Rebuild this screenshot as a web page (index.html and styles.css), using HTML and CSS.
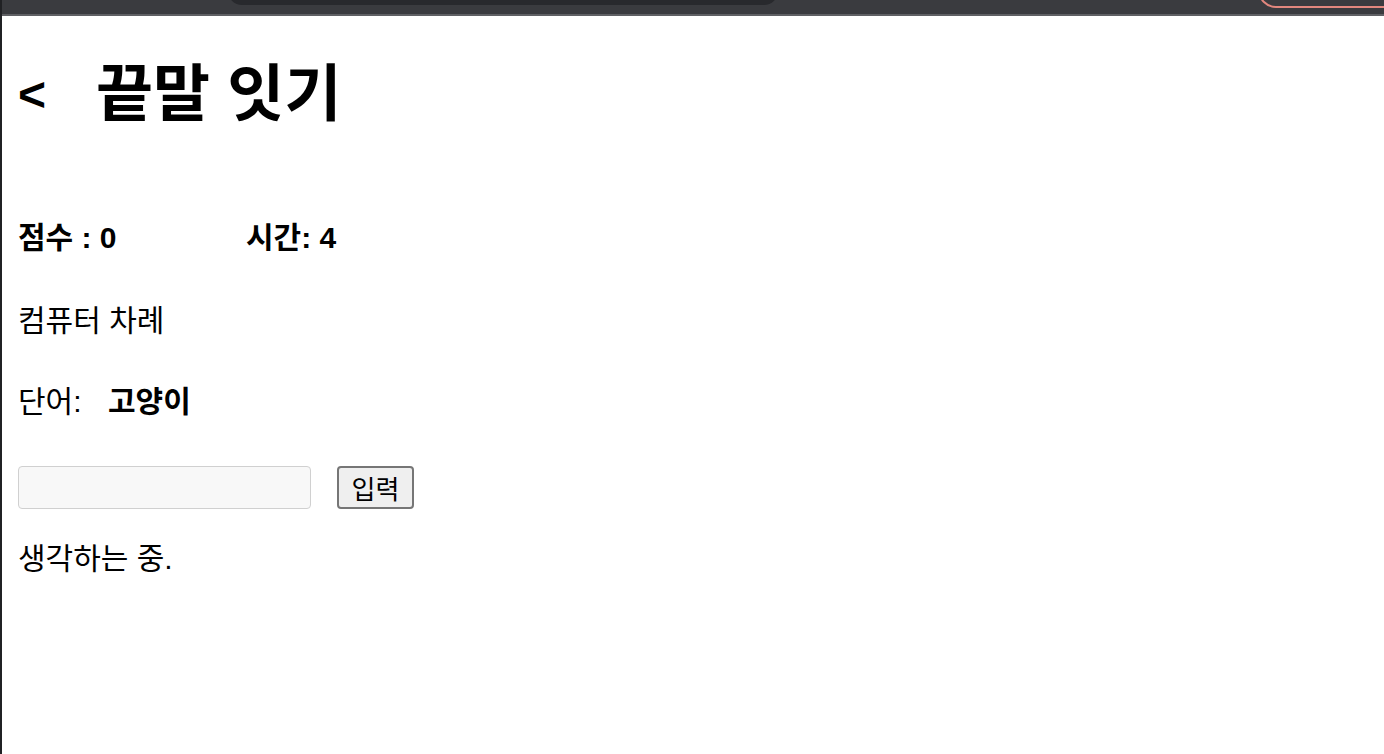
FILE: index.html
```html
<!DOCTYPE html>
<html lang="ko">
<head>
<meta charset="utf-8">
<title>끝말 잇기</title>
<link rel="stylesheet" href="styles.css">
</head>
<body>
<div class="chrome">
  <div class="tab"></div>
  <div class="pill"></div>
</div>
<main class="page">
  <h1 class="title"><span class="back">&lt;</span><span class="name">끝말 잇기</span></h1>
  <div class="stats">
    <span class="score">점수 : 0</span>
    <span class="time">시간: 4</span>
  </div>
  <p class="turn">컴퓨터 차례</p>
  <p class="word"><span class="label">단어:</span><b class="current">고양이</b></p>
  <form class="entry">
    <input class="field" type="text">
    <button class="submit" type="button">입력</button>
  </form>
  <p class="status">생각하는 중.</p>
</main>
</body>
</html>
```
FILE: styles.css
```css
html, body {
  margin: 0;
  height: 100%;
  background: #ffffff;
}
body {
  border-left: 2px solid #202124;
  box-sizing: border-box;
  font-family: "Liberation Sans", "Noto Sans CJK KR", sans-serif;
  color: #000;
  overflow: hidden;
}
.chrome {
  position: relative;
  height: 14px;
  background: #3a3b3f;
  border-bottom: 2px solid #5f6064;
  overflow: hidden;
}
.tab {
  position: absolute;
  left: 226px;
  top: -20px;
  width: 550px;
  height: 25px;
  background: #28292d;
  border-radius: 0 0 14px 14px;
}
.pill {
  position: absolute;
  left: 1256px;
  top: -30px;
  width: 200px;
  height: 34px;
  border: 2px solid #e2877e;
  border-radius: 18px;
}
.page {
  padding-left: 16px;
  display: flex;
  flex-direction: column;
}
.title {
  margin: 34px 0 0;
  display: flex;
  align-items: center;
  gap: 50px;
  font-size: 62px;
  font-weight: 700;
  line-height: 90px;
}
.back {
  font-size: 48px;
}
.stats {
  margin-top: 79px;
  display: flex;
  font-size: 30px;
  font-weight: 700;
  line-height: 38px;
}
.score {
  width: 228px;
}
.turn, .word, .status {
  margin: 0;
  font-size: 30px;
  line-height: 38px;
}
.turn {
  margin-top: 45px;
}
.word {
  margin-top: 43px;
  display: flex;
}
.label {
  width: 90px;
}
.current {
  font-weight: 700;
}
.entry {
  margin: 45px 0 0;
  display: flex;
  align-items: center;
  gap: 26px;
}
.field {
  width: 293px;
  height: 43px;
  box-sizing: border-box;
  border: 1.5px solid #d0d0d0;
  border-radius: 4px;
  background: #f8f8f8;
  margin: 0;
}
.submit {
  height: 43px;
  width: 77px;
  box-sizing: border-box;
  padding: 0;
  margin: 0;
  font-family: "Liberation Sans", "Noto Sans CJK KR", sans-serif;
  font-size: 26px;
  background: #efefef;
  border: 2px solid #767676;
  border-radius: 4px;
  color: #000;
}
.status {
  margin-top: 31px;
}
```
